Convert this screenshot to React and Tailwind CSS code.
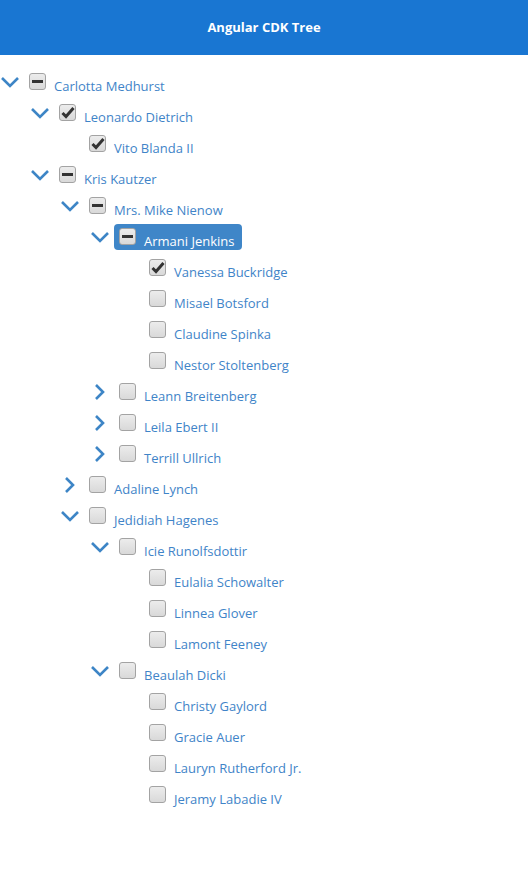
import React from "react";

const tree = [
  { name: "Carlotta Medhurst", level: 0, toggle: "down", check: "partial" },
  { name: "Leonardo Dietrich", level: 1, toggle: "down", check: "checked" },
  { name: "Vito Blanda II", level: 2, check: "checked" },
  { name: "Kris Kautzer", level: 1, toggle: "down", check: "partial" },
  { name: "Mrs. Mike Nienow", level: 2, toggle: "down", check: "partial" },
  { name: "Armani Jenkins", level: 3, toggle: "down", check: "partial", active: true },
  { name: "Vanessa Buckridge", level: 4, check: "checked" },
  { name: "Misael Botsford", level: 4 },
  { name: "Claudine Spinka", level: 4 },
  { name: "Nestor Stoltenberg", level: 4 },
  { name: "Leann Breitenberg", level: 3, toggle: "right" },
  { name: "Leila Ebert II", level: 3, toggle: "right" },
  { name: "Terrill Ullrich", level: 3, toggle: "right" },
  { name: "Adaline Lynch", level: 2, toggle: "right" },
  { name: "Jedidiah Hagenes", level: 2, toggle: "down" },
  { name: "Icie Runolfsdottir", level: 3, toggle: "down" },
  { name: "Eulalia Schowalter", level: 4 },
  { name: "Linnea Glover", level: 4 },
  { name: "Lamont Feeney", level: 4 },
  { name: "Beaulah Dicki", level: 3, toggle: "down" },
  { name: "Christy Gaylord", level: 4 },
  { name: "Gracie Auer", level: 4 },
  { name: "Lauryn Rutherford Jr.", level: 4 },
  { name: "Jeramy Labadie IV", level: 4 },
];

const Chevron = ({ dir }) =>
  dir === "down" ? (
    <svg width="20" height="12" viewBox="0 0 20 12" fill="none">
      <polyline points="2,2 10,10 18,2" stroke="#3d85c6" strokeWidth="2.6" />
    </svg>
  ) : (
    <svg width="12" height="18" viewBox="0 0 12 18" fill="none">
      <polyline points="2,2 9,9 2,16" stroke="#3d85c6" strokeWidth="2.6" />
    </svg>
  );

const Checkbox = ({ state }) => (
  <span className="flex h-[17px] w-[17px] shrink-0 items-center justify-center rounded-[3px] border border-[#a3a3a3] bg-gradient-to-b from-[#ececec] to-[#d9d9d9]">
    {state === "checked" && (
      <svg width="14" height="13" viewBox="0 0 14 13">
        <path d="M1.5 7 L5 10.5 L12.5 2" fill="none" stroke="#333" strokeWidth="3" />
      </svg>
    )}
    {state === "partial" && <span className="h-[3px] w-[11px] bg-[#333]" />}
  </span>
);

const App = () => {
  return (
    <div className="min-h-[891px] bg-white" style={{ fontFamily: '"Open Sans", sans-serif' }}>
      <header className="flex h-[55px] items-center justify-center bg-[#1976d2]">
        <h1 className="text-[13px] font-bold text-white">Angular CDK Tree</h1>
      </header>
      <div className="pt-[11px]">
        {tree.map((n) => (
          <div key={n.name} className="flex h-[31px] items-center" style={{ paddingLeft: n.level * 30 }}>
            <span className="flex w-[24px] shrink-0 items-center">
              <span className="flex w-[20px] justify-center">{n.toggle && <Chevron dir={n.toggle} />}</span>
            </span>
            <div className={`flex h-[26px] items-center gap-[8px] rounded-[4px] pl-[5px] ${n.active ? "bg-[#3f86c8] pr-[8px] text-white" : "pr-[5px] text-[#3f84c8]"}`}>
              <Checkbox state={n.check} />
              <span className="mt-[10px] text-[13px] leading-none whitespace-nowrap">{n.name}</span>
            </div>
          </div>
        ))}
      </div>
    </div>
  );
};

export default App;
